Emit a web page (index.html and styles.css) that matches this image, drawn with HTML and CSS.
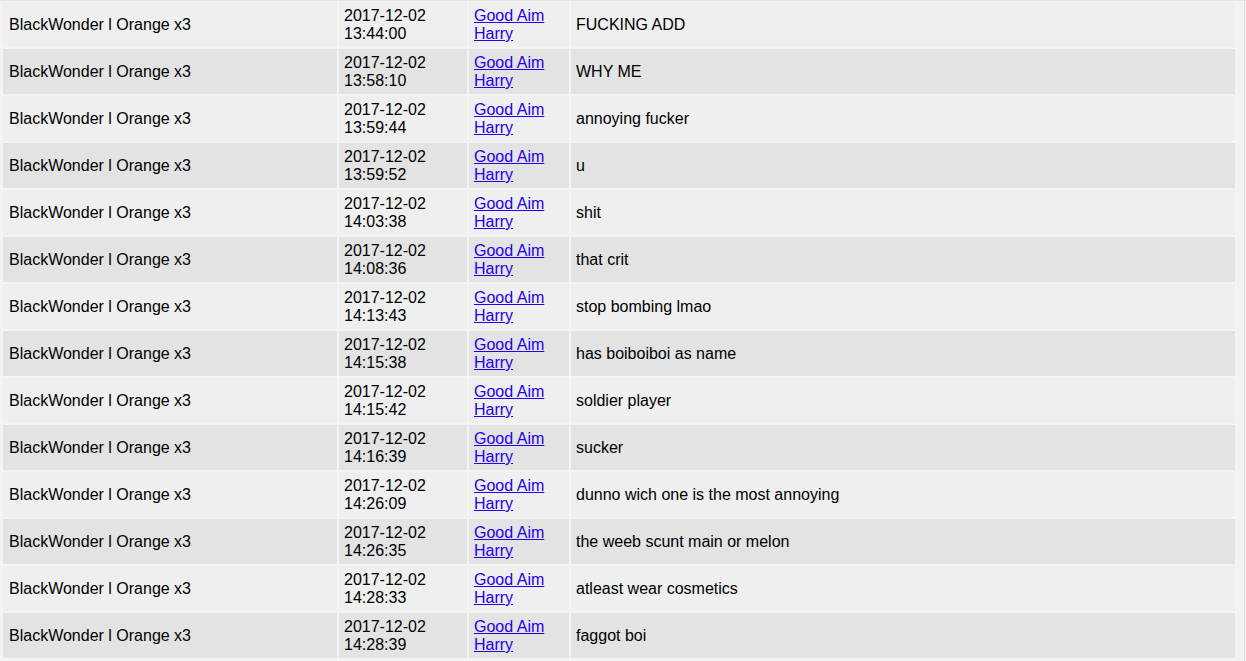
FILE: index.html
```html
<!DOCTYPE html>
<html lang="en">
<head>
    <meta charset="UTF-8">
    <title>Chat log</title>
    <link rel="stylesheet" href="styles.css">
</head>
<body>
    <div class="page">
        <table class="log">
            <colgroup>
                <col class="col-name">
                <col class="col-time">
                <col class="col-target">
                <col class="col-msg">
            </colgroup>
            <tr><td>BlackWonder l Orange x3</td><td>2017-12-02<br>13:44:00</td><td><a href="#">Good Aim Harry</a></td><td>FUCKING ADD</td></tr>
            <tr><td>BlackWonder l Orange x3</td><td>2017-12-02<br>13:58:10</td><td><a href="#">Good Aim Harry</a></td><td>WHY ME</td></tr>
            <tr><td>BlackWonder l Orange x3</td><td>2017-12-02<br>13:59:44</td><td><a href="#">Good Aim Harry</a></td><td>annoying fucker</td></tr>
            <tr><td>BlackWonder l Orange x3</td><td>2017-12-02<br>13:59:52</td><td><a href="#">Good Aim Harry</a></td><td>u</td></tr>
            <tr><td>BlackWonder l Orange x3</td><td>2017-12-02<br>14:03:38</td><td><a href="#">Good Aim Harry</a></td><td>shit</td></tr>
            <tr><td>BlackWonder l Orange x3</td><td>2017-12-02<br>14:08:36</td><td><a href="#">Good Aim Harry</a></td><td>that crit</td></tr>
            <tr><td>BlackWonder l Orange x3</td><td>2017-12-02<br>14:13:43</td><td><a href="#">Good Aim Harry</a></td><td>stop bombing lmao</td></tr>
            <tr><td>BlackWonder l Orange x3</td><td>2017-12-02<br>14:15:38</td><td><a href="#">Good Aim Harry</a></td><td>has boiboiboi as name</td></tr>
            <tr><td>BlackWonder l Orange x3</td><td>2017-12-02<br>14:15:42</td><td><a href="#">Good Aim Harry</a></td><td>soldier player</td></tr>
            <tr><td>BlackWonder l Orange x3</td><td>2017-12-02<br>14:16:39</td><td><a href="#">Good Aim Harry</a></td><td>sucker</td></tr>
            <tr><td>BlackWonder l Orange x3</td><td>2017-12-02<br>14:26:09</td><td><a href="#">Good Aim Harry</a></td><td>dunno wich one is the most annoying</td></tr>
            <tr><td>BlackWonder l Orange x3</td><td>2017-12-02<br>14:26:35</td><td><a href="#">Good Aim Harry</a></td><td>the weeb scunt main or melon</td></tr>
            <tr><td>BlackWonder l Orange x3</td><td>2017-12-02<br>14:28:33</td><td><a href="#">Good Aim Harry</a></td><td>atleast wear cosmetics</td></tr>
            <tr><td>BlackWonder l Orange x3</td><td>2017-12-02<br>14:28:39</td><td><a href="#">Good Aim Harry</a></td><td>faggot boi</td></tr>
        </table>
        <div class="track"></div>
    </div>
</body>
</html>
```

FILE: styles.css
```css
/* Grundlayout */
body {
    margin: 0;
    background-color: #f4f4f4;
    font-family: "Liberation Sans", Arial, sans-serif;
    font-size: 16px;
    color: #000;
    overflow: hidden;
    border-top: 1px solid #e3e3e3;
}

.page {
    display: flex;
    align-items: flex-start;
}

/* Tabelle */
.log {
    table-layout: fixed;
    width: 1236px;
    margin: -1px 0 0 1px;
    border-collapse: separate;
    border-spacing: 2px;
}

.col-name { width: 334px; }
.col-time { width: 128px; }
.col-target { width: 100px; }
.col-msg { width: 664px; }

.log td {
    height: 45px;
    padding: 1px 5px 0 5px;
    box-sizing: border-box;
    line-height: 18px;
    vertical-align: middle;
    background-color: #efefef;
}

.log td:first-child {
    padding: 0 5px 0 6px;
}

.log tr:nth-child(even) td {
    background-color: #e3e3e3;
}

.log a {
    color: #2200ee;
    text-decoration: underline;
}

/* Rechter Rand */
.track {
    flex: 1;
    height: 661px;
    border-right: 1px solid #e2e2e2;
    margin-right: 1px;
    background-color: #f2f2f2;
}
```
